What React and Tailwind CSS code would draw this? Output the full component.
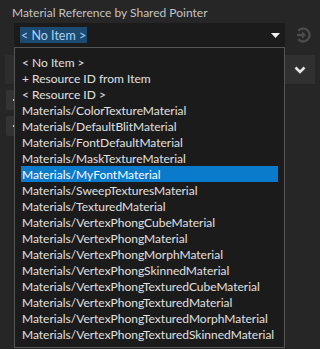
import React from 'react';

const items = [
  '< No Item >',
  '+ Resource ID from Item',
  '< Resource ID >',
  'Materials/ColorTextureMaterial',
  'Materials/DefaultBlitMaterial',
  'Materials/FontDefaultMaterial',
  'Materials/MaskTextureMaterial',
  'Materials/MyFontMaterial',
  'Materials/SweepTexturesMaterial',
  'Materials/TexturedMaterial',
  'Materials/VertexPhongCubeMaterial',
  'Materials/VertexPhongMaterial',
  'Materials/VertexPhongMorphMaterial',
  'Materials/VertexPhongSkinnedMaterial',
  'Materials/VertexPhongTexturedCubeMaterial',
  'Materials/VertexPhongTexturedMaterial',
  'Materials/VertexPhongTexturedMorphMaterial',
  'Materials/VertexPhongTexturedSkinnedMaterial',
];

const selected = 'Materials/MyFontMaterial';

const App = () => {
  return (
    <div
      className="relative w-[320px] h-[349px] overflow-hidden bg-[#262626] text-[12px] leading-[16px]"
      style={{ fontFamily: 'Lato, "Noto Sans", sans-serif' }}
    >
      {/* Label */}
      <div className="pl-[12px] pt-[5px] h-[23px] text-[#c4c4c4]">Material Reference by Shared Pointer</div>

      {/* Combo row */}
      <div className="flex items-center">
        <div className="ml-[14px] w-[271px] h-[24px] bg-[#1b1b1b] flex items-center pl-[6px] pr-[5px]">
          <span className="bg-[#1d4a70] text-[#a7d3f5] text-[12.5px] px-[1px] h-[16px] leading-[17px]">&lt; No Item &gt;</span>
          <div className="flex-1" />
          <svg width="9" height="5" viewBox="0 0 9 5">
            <path d="M0 0 L9 0 L4.5 5 Z" fill="#f2f2f2" />
          </svg>
        </div>
        <div className="flex-1 flex justify-center">
          <svg width="16" height="16" viewBox="0 0 16 16">
            <path d="M3.2 3.8 A6.5 6.5 0 1 1 3.2 12.2" fill="none" stroke="#4b4b4b" strokeWidth="2.4" />
            <path d="M2 6.8 L7 6.8 L7 4 L11 8 L7 12 L7 9.2 L2 9.2 Z" fill="#4b4b4b" />
          </svg>
        </div>
      </div>

      {/* Panel behind */}
      <div className="mt-[8px] mx-[5px] h-[30px] bg-[#2d2d2d] border-b border-[#242424] flex justify-end">
        <div className="w-[30px] h-full bg-[#303030] flex items-center justify-center">
          <svg width="12" height="8" viewBox="0 0 12 8">
            <path d="M1.5 1.5 L6 6 L10.5 1.5" fill="none" stroke="#e6e6e6" strokeWidth="2.5" />
          </svg>
        </div>
      </div>
      <div className="mt-[5px] ml-[6px] flex flex-col gap-[6px]">
        {[0, 1].map((i) => (
          <div key={i} className="w-[10px] h-[20px] bg-[#333333] rounded-[2px] flex items-center justify-end pr-[1px]">
            <div className="w-[2px] h-[2px] bg-[#cfcfcf]" />
          </div>
        ))}
      </div>

      {/* Dropdown list */}
      <div className="absolute left-[14px] top-[47px] w-[271px] h-[301px] bg-[#1b1b1b] border border-[#555555] pt-[6px] px-[6px]">
        {items.map((item) => (
          <div
            key={item}
            className={`h-[16px] whitespace-nowrap pl-[1px] leading-[18px] ${
              item === selected ? 'bg-[#0a7acb] text-white' : 'text-[#e0e0e0]'
            }`}
          >
            {item}
          </div>
        ))}
      </div>
    </div>
  );
};

export default App;
